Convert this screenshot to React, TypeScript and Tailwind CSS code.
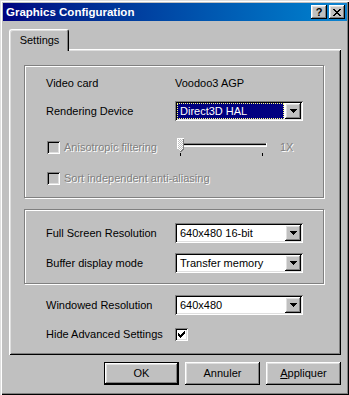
import React from 'react';

const raised = 'shadow-[inset_-1px_-1px_#000,inset_1px_1px_#fff,inset_-2px_-2px_#808080,inset_2px_2px_#dfdfdf]';
const sunken = 'shadow-[inset_1px_1px_#808080,inset_-1px_-1px_#fff,inset_2px_2px_#000,inset_-2px_-2px_#dfdfdf]';
const etched = 'border border-[#808080] shadow-[inset_1px_1px_#fff,1px_1px_#fff]';
const disabledText = 'text-[#808080] [text-shadow:1px_1px_0_#fff]';

const CHECK = ['......X', '.....XX', 'X...XXX', 'XX.XXX.', 'XXXXX..', '.XXX...', '..X....'];
const CLOSE = ['XX....XX', '.XX..XX.', '..XXXX..', '...XX...', '..XXXX..', '.XX..XX.', 'XX....XX'];
const ARROW = ['XXXXXXX', '.XXXXX.', '..XXX..', '...X...'];

function Pixels({ rows, color = '#000' }: { rows: string[]; color?: string }) {
  return (
    <svg width={rows[0].length} height={rows.length} shapeRendering="crispEdges" className="block">
      {rows.flatMap((r, y) =>
        r.split('').map((c, x) =>
          c === 'X' ? <rect key={`${x}-${y}`} x={x} y={y} width={1} height={1} fill={color} /> : null
        )
      )}
    </svg>
  );
}

function Combo({ value, focused }: { value: string; focused?: boolean }) {
  return (
    <div className={`w-[128px] h-[20px] bg-white ${sunken} flex p-[2px]`}>
      <div className="flex-1 flex items-center pr-[1px]">
        {focused ? (
          <div className="flex-1 h-[16px] bg-[#000080] text-white border border-dotted border-[#ffff80] flex items-center pl-[2px]">
            {value}
          </div>
        ) : (
          <span className="pl-[3px]">{value}</span>
        )}
      </div>
      <div className={`w-[16px] h-[16px] bg-[#c0c0c0] ${raised} flex items-center justify-center`}>
        <Pixels rows={ARROW} />
      </div>
    </div>
  );
}

function Check({ checked, disabled }: { checked?: boolean; disabled?: boolean }) {
  return (
    <div className={`w-[13px] h-[13px] shrink-0 ${sunken} ${disabled ? 'bg-[#c0c0c0]' : 'bg-white'} flex items-center justify-center`}>
      {checked && <Pixels rows={CHECK} />}
    </div>
  );
}

function Slider() {
  return (
    <svg width={105} height={20} shapeRendering="crispEdges" className="block">
      <defs>
        <pattern id="dither" width="2" height="2" patternUnits="userSpaceOnUse">
          <rect width="2" height="2" fill="#c0c0c0" />
          <rect width="1" height="1" fill="#fff" />
          <rect x="1" y="1" width="1" height="1" fill="#fff" />
        </pattern>
      </defs>
      <rect x={5} y={6} width={87} height={1} fill="#808080" />
      <rect x={5} y={6} width={1} height={3} fill="#808080" />
      <rect x={6} y={7} width={85} height={1} fill="#000" />
      <rect x={6} y={8} width={85} height={1} fill="#dfdfdf" />
      <rect x={5} y={9} width={87} height={1} fill="#fff" />
      <rect x={91} y={6} width={1} height={4} fill="#fff" />
      <polygon points="2,1 9,1 9,12 5.5,15.5 2,12" fill="url(#dither)" />
      <polyline points="2.5,12 2.5,1.5 8.5,1.5" fill="none" stroke="#fff" strokeWidth={1} />
      <polyline points="8.5,1.5 8.5,12 5.5,15" fill="none" stroke="#808080" strokeWidth={1} />
      <rect x={5} y={16} width={1} height={3} fill="#000" />
      <rect x={87} y={16} width={1} height={3} fill="#000" />
    </svg>
  );
}

function Button({ children, isDefault }: { children: React.ReactNode; isDefault?: boolean }) {
  return (
    <div className={`w-[75px] h-[23px] ${isDefault ? 'border border-black' : ''} flex`}>
      <div className={`flex-1 bg-[#c0c0c0] ${raised} flex items-center justify-center`}>{children}</div>
    </div>
  );
}

export default function App() {
  return (
    <div className="w-[349px] h-[395px] bg-[#c0c0c0] pl-[3px] pt-[3px] pr-[2px] pb-[2px] shadow-[inset_1px_1px_#dfdfdf,inset_2px_2px_#fff,inset_-1px_-1px_#000,inset_-2px_-2px_#808080] font-['Liberation_Sans',Arial,sans-serif] text-[11px] leading-[13px] text-black">
      <div className="h-[18px] bg-gradient-to-r from-[#000080] to-[#1084d0] flex items-center pl-[3px] pr-[2px]">
        <span className="font-bold text-white text-[11.5px]">Graphics Configuration</span>
        <div className="ml-auto flex gap-[2px]">
          <div className={`w-[16px] h-[14px] bg-[#c0c0c0] ${raised} flex items-center justify-center font-bold text-[11px] leading-[11px]`}>
            ?
          </div>
          <div className={`w-[16px] h-[14px] bg-[#c0c0c0] ${raised} flex items-center justify-center pr-[1px]`}>
            <Pixels rows={CLOSE} />
          </div>
        </div>
      </div>

      <div className="pl-[6px] pr-[6px] pt-[8px]">
        <div className="flex">
          <div className="relative z-10 w-[60px] h-[22px] -mb-[2px] bg-[#c0c0c0] border-l border-t border-r border-l-white border-t-white border-r-black rounded-tl-[3px] rounded-tr-[3px] shadow-[inset_1px_1px_#dfdfdf,inset_-1px_0_#808080] flex justify-center pt-[4px] pl-[1px]">
            Settings
          </div>
        </div>

        <div className="h-[306px] pt-[16px] shadow-[inset_1px_1px_#fff,inset_-1px_-1px_#000,inset_2px_2px_#dfdfdf,inset_-2px_-2px_#808080]">
          <div className={`ml-[15px] w-[300px] h-[133px] ${etched} pl-[21px]`}>
            <div className="mt-[7px] h-[20px] flex items-center">
              <span className="w-[129px]">Video card</span>
              <span>Voodoo3 AGP</span>
            </div>
            <div className="mt-[8px] h-[20px] flex items-center">
              <span className="w-[129px]">Rendering Device</span>
              <Combo value="Direct3D HAL" focused />
            </div>
            <div className="mt-[16px] h-[20px] flex items-center">
              <div className="w-[129px] flex items-center gap-[4px] pl-[1px]">
                <Check disabled />
                <span className={disabledText}>Anisotropic filtering</span>
              </div>
              <Slider />
              <span className={disabledText}>1X</span>
            </div>
            <div className="mt-[11px] h-[20px] flex items-center gap-[4px] pl-[1px]">
              <Check disabled />
              <span className={disabledText}>Sort independent anti-aliasing</span>
            </div>
          </div>

          <div className={`mt-[11px] ml-[15px] w-[300px] h-[75px] ${etched} pl-[21px]`}>
            <div className="mt-[13px] h-[20px] flex items-center">
              <span className="w-[129px]">Full Screen Resolution</span>
              <Combo value="640x480 16-bit" />
            </div>
            <div className="mt-[10px] h-[20px] flex items-center">
              <span className="w-[129px]">Buffer display mode</span>
              <Combo value="Transfer memory" />
            </div>
          </div>

          <div className="mt-[11px] ml-[37px] h-[20px] flex items-center">
            <span className="w-[129px]">Windowed Resolution</span>
            <Combo value="640x480" />
          </div>
          <div className="mt-[9px] ml-[37px] h-[20px] flex items-center">
            <span className="w-[129px]">Hide Advanced Settings</span>
            <Check checked />
          </div>
        </div>

        <div className="mt-[7px] flex justify-end gap-[6px]">
          <Button isDefault>OK</Button>
          <Button>Annuler</Button>
          <Button>
            <span>
              <span className="underline">A</span>ppliquer
            </span>
          </Button>
        </div>
      </div>
    </div>
  );
}
